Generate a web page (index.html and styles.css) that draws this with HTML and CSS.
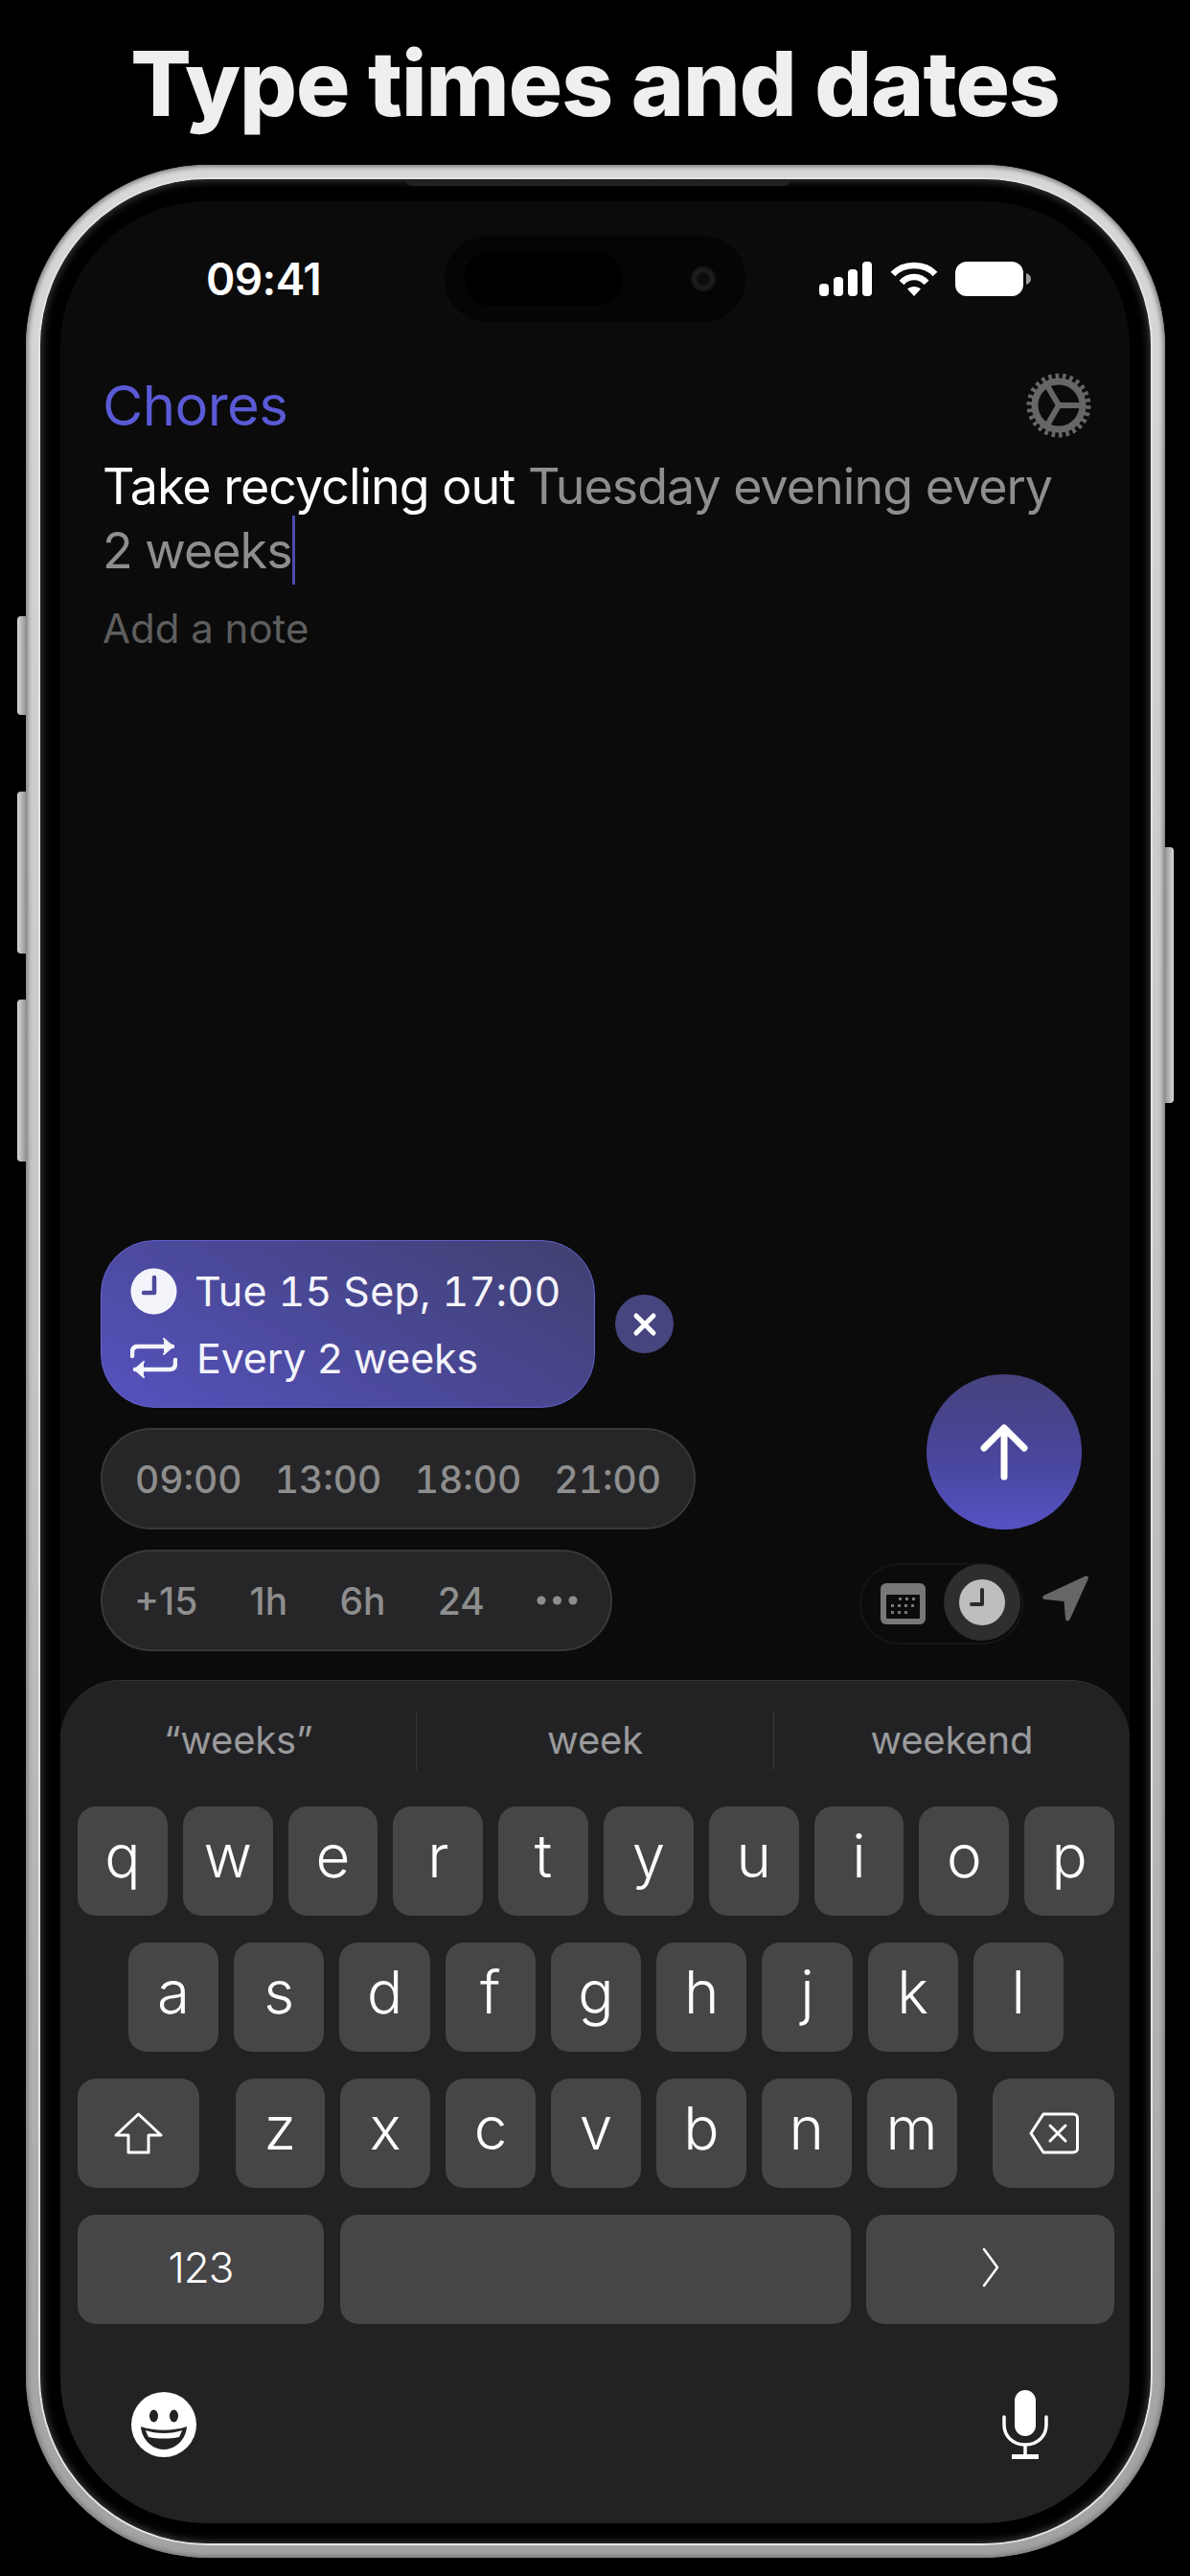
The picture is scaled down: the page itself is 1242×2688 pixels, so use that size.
FILE: index.html
```html
<!DOCTYPE html>
<html>
<head>
    <title>Type times and dates</title>
    <meta name="viewport" content="width=device-width, initial-scale=1.0">
    <link rel="stylesheet" href="styles.css">
</head>
<body>
    <h1 class="headline">Type times and dates</h1>

    <div class="phone">
        <div class="side-btn side-mute"></div>
        <div class="side-btn side-up"></div>
        <div class="side-btn side-down"></div>
        <div class="side-btn side-power"></div>
        <div class="earpiece"></div>

        <div class="bezel">
            <div class="screen">
                <div class="statusbar">
                    <span class="time">09:41</span>
                    <div class="island">
                        <div class="island-sensor"></div>
                        <div class="island-cam"></div>
                    </div>
                    <div class="status-icons">
                        <svg width="56" height="36" viewBox="0 0 56 36" fill="#fff">
                            <rect x="0" y="23" width="10" height="13" rx="4"/>
                            <rect x="15" y="16" width="10" height="20" rx="4"/>
                            <rect x="30" y="8" width="10" height="28" rx="4"/>
                            <rect x="45" y="0" width="10" height="36" rx="4"/>
                        </svg>
                        <svg width="50" height="36" viewBox="0 0 50 36" fill="none" stroke="#fff" stroke-width="6.5">
                            <path d="M3 13 C14 1 36 1 47 13"/>
                            <path d="M12 22 C19 14 31 14 38 22"/>
                            <path d="M25 36 L18 28.500 C22 25 28 25 32 28.500 Z" fill="#fff" stroke="none"/>
                        </svg>
                        <svg width="79" height="36" viewBox="0 0 79 36" fill="#fff">
                            <rect x="0" y="0" width="71" height="36" rx="12"/>
                            <path d="M74 12 C77 13 79 15 79 18 C79 21 77 23 74 24 Z" opacity="0.6"/>
                        </svg>
                    </div>
                </div>

                <div class="compose">
                    <div class="list-row">
                        <span class="list-name">Chores</span>
                        <svg class="gear" width="70" height="70" viewBox="0 0 70 70" fill="none" stroke="#666">
                            <circle cx="35" cy="35" r="30" stroke-width="7" stroke-dasharray="3.600 3.650"/>
                            <circle cx="35" cy="35" r="25" stroke-width="7"/>
                            <path d="M35 35 H60 M35 35 L22.500 13.400 M35 35 L22.500 56.600" stroke-width="6"/>
                        </svg>
                    </div>
                    <p class="task">Take recycling out <span class="parsed">Tuesday evening every 2 weeks</span><span class="caret"></span></p>
                    <p class="note">Add a note</p>
                </div>

                <div class="tools">
                    <div class="chips">
                        <div class="chip-row">
                            <div class="when">
                                <div class="when-line when-date">
                                    <svg width="49" height="49" viewBox="0 0 49 49">
                                        <circle cx="24.500" cy="24.500" r="24" fill="#f4f4fb"/>
                                        <path d="M25 10 V26 H14" fill="none" stroke="#4d4a9c" stroke-width="4.500" stroke-linecap="round" stroke-linejoin="round"/>
                                    </svg>
                                    <span>Tue 15 Sep, 17:00</span>
                                </div>
                                <div class="when-line when-repeat">
                                    <svg width="49" height="42" viewBox="0 0 49 42" fill="none" stroke="#f4f4fb" stroke-width="4.500" stroke-linecap="round" stroke-linejoin="round">
                                        <path d="M2 19 V15 C2 11 4 9 8 9 H44"/>
                                        <path d="M35 1 L44 9 L35 17" fill="#f4f4fb" stroke-width="2"/>
                                        <path d="M47 23 V27 C47 31 45 33 41 33 H5"/>
                                        <path d="M14 25 L5 33 L14 41" fill="#f4f4fb" stroke-width="2"/>
                                    </svg>
                                    <span>Every 2 weeks</span>
                                </div>
                            </div>
                            <div class="when-close">
                                <svg width="26" height="26" viewBox="0 0 26 26" stroke="#fff" stroke-width="5" stroke-linecap="round">
                                    <path d="M4 4 L22 22 M22 4 L4 22"/>
                                </svg>
                            </div>
                        </div>
                        <div class="pill pill-times">
                            <span>09:00</span>
                            <span>13:00</span>
                            <span>18:00</span>
                            <span>21:00</span>
                        </div>
                        <div class="pill pill-offsets">
                            <span>+15</span>
                            <span>1h</span>
                            <span>6h</span>
                            <span>24</span>
                            <svg width="43" height="10" viewBox="0 0 43 10" fill="#8e8e8e">
                                <circle cx="5" cy="5" r="4.500"/>
                                <circle cx="21.500" cy="5" r="4.500"/>
                                <circle cx="38" cy="5" r="4.500"/>
                            </svg>
                        </div>
                    </div>

                    <div class="actions">
                        <div class="send">
                            <svg width="50" height="60" viewBox="0 0 50 60" fill="none" stroke="#fff" stroke-width="7" stroke-linecap="round" stroke-linejoin="round">
                                <path d="M25 56 V5 M4 26 L25 5 L46 26"/>
                            </svg>
                        </div>
                        <div class="mode-row">
                            <div class="mode-pill">
                                <svg width="47" height="43" viewBox="0 0 47 43">
                                    <rect width="47" height="43" rx="6" fill="#777"/>
                                    <rect x="6" y="12" width="35" height="25" rx="1" fill="#0b0b0c"/>
                                    <g fill="#777">
                                        <rect x="19" y="15" width="3" height="3"/><rect x="26" y="15" width="3" height="3"/><rect x="33" y="15" width="3" height="3"/>
                                        <rect x="11" y="22" width="3" height="3"/><rect x="18" y="22" width="3" height="3"/><rect x="25" y="22" width="3" height="3"/><rect x="32" y="22" width="3" height="3"/>
                                        <rect x="11" y="29" width="3" height="3"/><rect x="18" y="29" width="3" height="3"/><rect x="25" y="29" width="3" height="3"/>
                                    </g>
                                </svg>
                                <div class="mode-active">
                                    <svg width="48" height="48" viewBox="0 0 48 48">
                                        <circle cx="24" cy="24" r="24" fill="#bdbdbd"/>
                                        <path d="M24 11 V26 H13" fill="none" stroke="#2b2b2d" stroke-width="4" stroke-linecap="round" stroke-linejoin="round"/>
                                    </svg>
                                </div>
                            </div>
                            <svg class="nav-icon" width="48" height="48" viewBox="0 0 48 48" fill="#666">
                                <path d="M45 0.500 C47.500 0 48.500 1.500 47.500 4 L29 45 C27.500 48.500 24.500 48 24 45 L22.500 27 L3 25 C-0.500 24.500 -0.500 22 2 20.500 Z"/>
                            </svg>
                        </div>
                    </div>
                </div>

                <div class="keyboard">
                    <div class="suggestions">
                        <span>“weeks”</span>
                        <span>week</span>
                        <span>weekend</span>
                    </div>
                    <div class="keys">
                        <div class="key-row">
                            <div class="key">q</div><div class="key">w</div><div class="key">e</div><div class="key">r</div><div class="key">t</div><div class="key">y</div><div class="key">u</div><div class="key">i</div><div class="key">o</div><div class="key">p</div>
                        </div>
                        <div class="key-row row-middle">
                            <div class="key">a</div><div class="key">s</div><div class="key">d</div><div class="key">f</div><div class="key">g</div><div class="key">h</div><div class="key">j</div><div class="key">k</div><div class="key">l</div>
                        </div>
                        <div class="key-row">
                            <div class="key key-mod">
                                <svg width="51" height="44" viewBox="0 0 51 44" fill="none" stroke="#fff" stroke-width="3" stroke-linejoin="round">
                                    <path d="M25.500 2 L49 24 H36 V42 H15 V24 H2 Z"/>
                                </svg>
                            </div>
                            <div class="letters">
                                <div class="key">z</div><div class="key">x</div><div class="key">c</div><div class="key">v</div><div class="key">b</div><div class="key">n</div><div class="key">m</div>
                            </div>
                            <div class="key key-mod">
                                <svg width="52" height="44" viewBox="0 0 52 44" fill="none" stroke="#fff" stroke-width="3" stroke-linejoin="round" stroke-linecap="round">
                                    <path d="M15 2 H46 C49 2 50.500 4 50.500 6 V38 C50.500 40 49 42 46 42 H15 L2 22 Z"/>
                                    <path d="M22 14 L38 30 M38 14 L22 30"/>
                                </svg>
                            </div>
                        </div>
                        <div class="key-row">
                            <div class="key key-123">123</div>
                            <div class="key key-space"></div>
                            <div class="key key-return">
                                <svg width="18" height="42" viewBox="0 0 18 42" fill="none" stroke="#fff" stroke-width="2.500" stroke-linecap="round" stroke-linejoin="round">
                                    <path d="M2 2 L16 21 L2 40"/>
                                </svg>
                            </div>
                        </div>
                    </div>
                    <div class="kb-bottom">
                        <svg width="68" height="68" viewBox="0 0 68 68">
                            <circle cx="34" cy="34" r="34" fill="#fff"/>
                            <ellipse cx="23.500" cy="25" rx="4.500" ry="6.500" fill="#232326"/>
                            <ellipse cx="44.500" cy="25" rx="4.500" ry="6.500" fill="#232326"/>
                            <path d="M10 36 C24 41 44 41 58 36 C57 50 46 60 34 60 C22 60 11 50 10 36 Z" fill="#232326"/>
                            <path d="M15 40 C26 44 42 44 53 40 C52 43 51 45 50 47 C40 49 28 49 18 47 C17 45 16 43 15 40 Z" fill="#fff"/>
                        </svg>
                        <svg width="50" height="72" viewBox="0 0 50 72" fill="none" stroke="#fff">
                            <rect x="14" y="0" width="22" height="48" rx="11" fill="#fff" stroke="none"/>
                            <path d="M3 28 V36 C3 48 12 57 25 57 C38 57 47 48 47 36 V28" stroke-width="3.500" stroke-linecap="round"/>
                            <path d="M25 57 V68" stroke-width="3.500"/>
                            <path d="M11 69.500 H39" stroke-width="5"/>
                        </svg>
                    </div>
                </div>
            </div>
        </div>
    </div>
</body>
</html>
```

FILE: styles.css
```css
* {
    box-sizing: border-box;
}
body {
    margin: 0;
    width: 1242px;
    height: 2688px;
    overflow: hidden;
    background-color: #000;
    font-family: Inter, "Liberation Sans", sans-serif;
}
svg {
    display: block;
    flex: none;
}

.headline {
    margin: 0;
    height: 172px;
    padding-top: 3px;
    line-height: 169px;
    font-size: 94px;
    font-weight: 800;
    letter-spacing: -1px;
    text-align: center;
    color: #efefef;
}

/* phone frame */
.phone {
    position: relative;
    width: 1189px;
    height: 2497px;
    margin-left: 27px;
    padding: 15px;
    border-radius: 190px;
    background: linear-gradient(180deg, #d8d8d8 0%, #c4c4c4 50%, #a2a2a0 100%);
    box-shadow: inset 0 0 5px 2px #777;
}
.bezel {
    height: 100%;
    padding: 23px 22px 21px 21px;
    border-radius: 175px;
    background-color: #000;
    box-shadow: 0 0 0 2px #e4e4e4, inset 0 0 10px 1px #444;
}
.screen {
    display: flex;
    flex-direction: column;
    height: 100%;
    border-radius: 152px;
    overflow: hidden;
    background-color: #0b0b0c;
}
.earpiece {
    position: absolute;
    top: 17px;
    left: 397px;
    width: 400px;
    height: 5px;
    border-radius: 0 0 8px 8px;
    background-color: #222;
}
.side-btn {
    position: absolute;
    left: -9px;
    width: 10px;
    border-radius: 4px 0 0 4px;
    background: linear-gradient(90deg, #d8d8d8, #8c8c8c);
}
.side-mute { top: 471px; height: 103px; }
.side-up { top: 654px; height: 169px; }
.side-down { top: 871px; height: 169px; }
.side-power {
    top: 712px;
    left: 1188px;
    height: 267px;
    border-radius: 0 4px 4px 0;
    background: linear-gradient(90deg, #8c8c8c, #d8d8d8);
}

/* status bar */
.statusbar {
    display: flex;
    align-items: center;
    height: 90px;
    margin-top: 36px;
    flex: none;
}
.time {
    width: 120px;
    margin-left: 152px;
    font-size: 46px;
    font-weight: 600;
    letter-spacing: -0.6px;
    color: #fff;
}
.island {
    display: flex;
    align-items: center;
    justify-content: space-between;
    width: 314px;
    height: 90px;
    margin-left: 129px;
    padding: 0 31px 0 21px;
    border-radius: 45px;
    background-color: #050505;
}
.island-sensor {
    width: 165px;
    height: 56px;
    border-radius: 26px;
    background-color: #000;
}
.island-cam {
    width: 26px;
    height: 26px;
    border-radius: 50%;
    background: radial-gradient(circle, #0c0c0c 0 30%, #1e1e1e 45%, #0a0a0a 100%);
}
.status-icons {
    display: flex;
    align-items: center;
    gap: 18px;
    margin-left: 77px;
}

/* text entry */
.compose {
    flex: none;
    padding: 52px 44px 0;
}
.list-row {
    display: flex;
    align-items: center;
    justify-content: space-between;
    height: 70px;
}
.list-name {
    font-size: 58px;
    letter-spacing: -0.6px;
    color: #5a5ad6;
}
.gear {
    margin-right: -5px;
}
.task {
    margin: 16px 0 0;
    font-size: 52px;
    line-height: 67px;
    letter-spacing: -1px;
    color: #fff;
}
.parsed {
    color: #8e8e8e;
}
.caret {
    display: inline-block;
    width: 3px;
    height: 72px;
    margin: -10px 0;
    vertical-align: -7px;
    background-color: #4a4ab0;
}
.note {
    margin: 23px 0 0;
    font-size: 42px;
    line-height: 50px;
    color: #5e5e5e;
}

/* chips and send */
.tools {
    display: flex;
    justify-content: space-between;
    margin-top: auto;
    padding: 0 43px 30px 42px;
    flex: none;
}
.chips {
    display: flex;
    flex-direction: column;
    gap: 21px;
}
.chip-row {
    display: flex;
    align-items: center;
    gap: 21px;
}
.when {
    width: 516px;
    height: 175px;
    padding: 17px 0 0 30px;
    border-radius: 56px;
    border: 1px solid #6462cc;
    background: linear-gradient(30deg, #5652bf 0%, #4a4896 50%, #40406f 100%);
    color: #f4f4fb;
    font-size: 43px;
}
.when-line {
    display: flex;
    align-items: center;
    height: 70px;
}
.when-date {
    gap: 18px;
    font-variant-numeric: tabular-nums;
    letter-spacing: 0.2px;
}
.when-repeat {
    gap: 20px;
    letter-spacing: -0.2px;
}
.when-close {
    display: flex;
    align-items: center;
    justify-content: center;
    width: 61px;
    height: 61px;
    border-radius: 50%;
    background-color: #47457f;
}
.pill {
    display: flex;
    align-items: center;
    justify-content: space-between;
    height: 106px;
    border-radius: 53px;
    border: 2px solid #38383a;
    background-color: #262628;
    font-size: 39px;
    font-weight: 500;
    color: #8e8e8e;
}
.pill-times {
    width: 621px;
    padding: 0 34px;
    font-variant-numeric: tabular-nums;
}
.pill-offsets {
    width: 534px;
    padding: 0 34px 0 33px;
}

.actions {
    display: flex;
    flex-direction: column;
    align-items: flex-end;
    justify-content: flex-end;
    gap: 35px;
    padding-bottom: 7px;
}
.send {
    display: flex;
    align-items: center;
    justify-content: center;
    width: 162px;
    height: 162px;
    margin-right: 7px;
    border-radius: 50%;
    background: linear-gradient(180deg, #45427d 0%, #4a47a0 60%, #5652c4 100%);
}
.mode-row {
    display: flex;
    align-items: center;
    gap: 20px;
}
.mode-pill {
    display: flex;
    align-items: center;
    gap: 19px;
    width: 171px;
    height: 85px;
    padding-left: 20px;
    border-radius: 42px;
    border: 2px solid #151517;
}
.mode-active {
    display: flex;
    align-items: center;
    justify-content: center;
    width: 80px;
    height: 80px;
    margin-top: -4px;
    border-radius: 50%;
    background-color: #2e2e30;
}
.nav-icon {
    margin-top: -11px;
}

/* keyboard */
.keyboard {
    flex: none;
    height: 880px;
    border-radius: 62px 62px 0 0;
    border-top: 1px solid #333335;
    background-color: #222225;
}
.suggestions {
    display: flex;
    height: 61px;
    margin-top: 32px;
}
.suggestions span {
    display: flex;
    align-items: center;
    justify-content: center;
    flex: 1;
    padding-bottom: 2px;
    font-size: 40px;
    letter-spacing: -0.2px;
    color: #9a9a9c;
    border-right: 1px solid #38383a;
}
.suggestions span:last-child {
    border-right: none;
}
.keys {
    display: flex;
    flex-direction: column;
    gap: 28px;
    margin-top: 38px;
    padding: 0 16px 0 18px;
}
.key-row {
    display: flex;
    justify-content: space-between;
    gap: 16px;
}
.row-middle {
    padding: 0 53px;
}
.letters {
    display: flex;
    gap: 16px;
    width: 753px;
}
.key {
    display: flex;
    align-items: center;
    justify-content: center;
    flex: 1;
    height: 114px;
    padding-bottom: 11px;
    border-radius: 19px;
    background-color: #464649;
    font-size: 62px;
    font-weight: 300;
    color: #fff;
}
.key-mod {
    flex: none;
    width: 127px;
    padding-bottom: 0;
}
.key-123 {
    flex: none;
    width: 257px;
    padding-bottom: 4px;
    font-size: 44px;
    letter-spacing: -1px;
}
.key-space {
    flex: none;
    width: 533px;
}
.key-return {
    flex: none;
    width: 259px;
    padding-bottom: 4px;
}
.kb-bottom {
    display: flex;
    align-items: center;
    justify-content: space-between;
    margin-top: 69px;
    padding: 0 84px 0 74px;
}
```
